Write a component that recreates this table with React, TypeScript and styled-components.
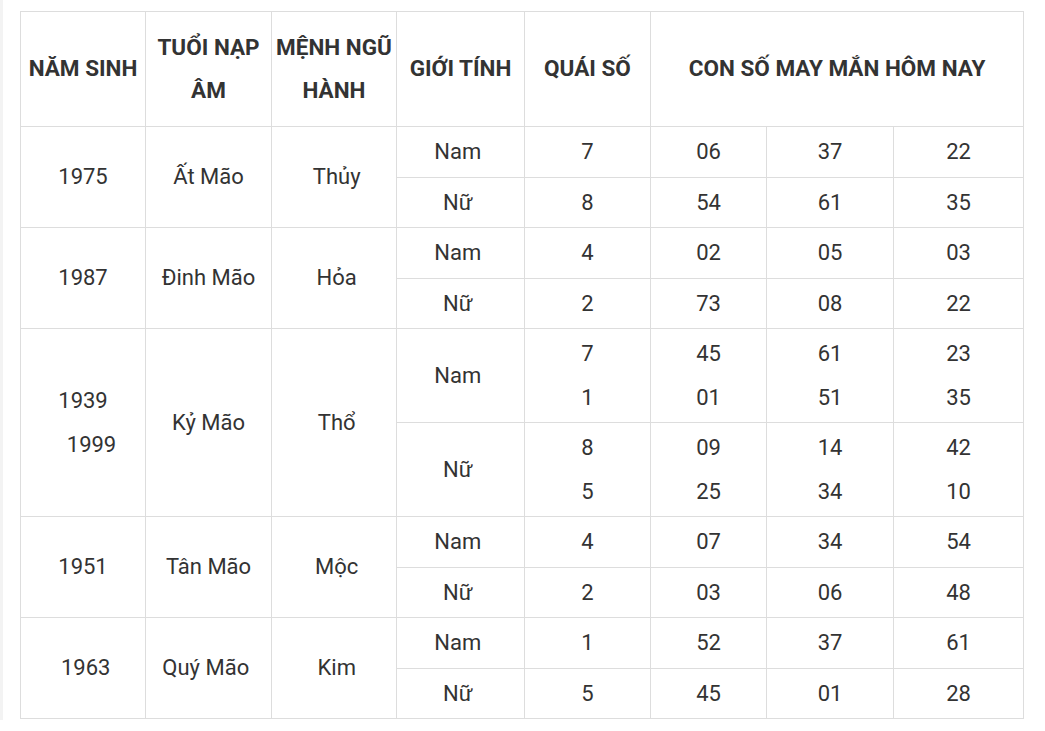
import React, { FC, ReactElement } from 'react';
import styled, { createGlobalStyle } from 'styled-components';

const GlobalStyle = createGlobalStyle`
  html, body {
    margin: 0;
    padding: 0;
    background: #ffffff;
  }
  body {
    font-family: Roboto, "Noto Sans", "Liberation Sans", sans-serif;
    color: #333333;
  }
`;

const Page = styled.div`
  border-left: 3px solid #f3f3f3;
  padding: 11px 0 0 17px;
  min-height: 720px;
  box-sizing: border-box;
`;

const Table = styled.table`
  border-collapse: collapse;
  table-layout: fixed;
  width: 1003px;
  font-size: 22px;
`;

const HeadCell = styled.th`
  border: 1px solid #dddddd;
  padding: 13.5px 3px;
  line-height: 43.5px;
  font-size: 22.5px;
  font-weight: 700;
  text-align: center;
  vertical-align: middle;
  color: #333333;
`;

const Cell = styled.td`
  border: 1px solid #dddddd;
  padding: 3px 3px;
  line-height: 43.5px;
  font-weight: 400;
  text-align: center;
  vertical-align: middle;
  color: #333333;
  white-space: pre;
`;

const Line = styled.div<{ indent?: number }>`
  padding-left: ${p => p.indent || 0}px;
`;

type Gender = {
  label: string;
  qs: string[];
  nums: string[][];
};

type Group = {
  years: string[];
  napAm: string;
  menh: string;
  rows: Gender[];
};

const NB = '\u00a0';

const groups: Group[] = [
  {
    years: ['1975'],
    napAm: 'Ất Mão',
    menh: `${NB}Thủy`,
    rows: [
      { label: `Nam${NB}`, qs: ['7'], nums: [['06'], ['37'], ['22']] },
      { label: `Nữ${NB}`, qs: ['8'], nums: [['54'], ['61'], ['35']] },
    ],
  },
  {
    years: ['1987'],
    napAm: 'Đinh Mão',
    menh: `${NB}Hỏa`,
    rows: [
      { label: `Nam${NB}`, qs: ['4'], nums: [['02'], ['05'], ['03']] },
      { label: `Nữ${NB}`, qs: ['2'], nums: [['73'], ['08'], ['22']] },
    ],
  },
  {
    years: ['1939', '1999'],
    napAm: 'Kỷ Mão',
    menh: `${NB}Thổ`,
    rows: [
      { label: `Nam${NB}`, qs: ['7', '1'], nums: [['45', '01'], ['61', '51'], ['23', '35']] },
      { label: `Nữ${NB}`, qs: ['8', '5'], nums: [['09', '25'], ['14', '34'], ['42', '10']] },
    ],
  },
  {
    years: ['1951'],
    napAm: 'Tân Mão',
    menh: `${NB}Mộc`,
    rows: [
      { label: `Nam${NB}`, qs: ['4'], nums: [['07'], ['34'], ['54']] },
      { label: `Nữ${NB}`, qs: ['2'], nums: [['03'], ['06'], ['48']] },
    ],
  },
  {
    years: [`${NB}1963`],
    napAm: `Quý Mão${NB}`,
    menh: `${NB}Kim`,
    rows: [
      { label: `Nam${NB}`, qs: ['1'], nums: [['52'], ['37'], ['61']] },
      { label: `Nữ${NB}`, qs: ['5'], nums: [['45'], ['01'], ['28']] },
    ],
  },
];

const colWidths = [125, 126, 125, 128, 126, 116, 127, 130];

const Lines: FC<{ items: string[] }> = ({ items }): ReactElement => (
  <>
    {items.map((t, i) => <Line key={i}>{t}</Line>)}
  </>
);

export default function App(): ReactElement {
  return (
    <Page>
      <GlobalStyle />
      <Table>
        <colgroup>
          {colWidths.map((w, i) => <col key={i} style={{ width: w }} />)}
        </colgroup>
        <thead>
          <tr>
            <HeadCell>NĂM SINH</HeadCell>
            <HeadCell>TUỔI NẠP ÂM</HeadCell>
            <HeadCell>MỆNH NGŨ HÀNH</HeadCell>
            <HeadCell>GIỚI TÍNH</HeadCell>
            <HeadCell>QUÁI SỐ</HeadCell>
            <HeadCell colSpan={3}>CON SỐ MAY MẮN HÔM NAY</HeadCell>
          </tr>
        </thead>
        <tbody>
          {groups.map((g, gi) =>
            g.rows.map((r, ri) => (
              <tr key={`${gi}-${ri}`}>
                {ri === 0 && (
                  <>
                    <Cell rowSpan={g.rows.length}>
                      {g.years.map((y, yi) => (
                        <Line key={yi} indent={yi > 0 ? 17 : 0}>{y}</Line>
                      ))}
                    </Cell>
                    <Cell rowSpan={g.rows.length}>{g.napAm}</Cell>
                    <Cell rowSpan={g.rows.length}>{g.menh}</Cell>
                  </>
                )}
                <Cell>{r.label}</Cell>
                <Cell><Lines items={r.qs} /></Cell>
                {r.nums.map((n, ni) => (
                  <Cell key={ni}><Lines items={n} /></Cell>
                ))}
              </tr>
            ))
          )}
        </tbody>
      </Table>
    </Page>
  );
}
